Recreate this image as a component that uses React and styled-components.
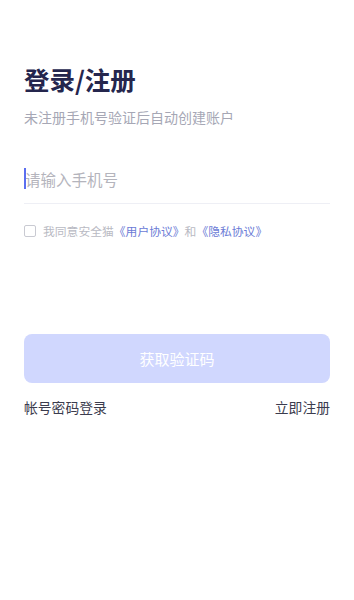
import React, { useState } from "react";
import styled, { createGlobalStyle } from "styled-components";

const GlobalStyle = createGlobalStyle`
  html, body {
    margin: 0;
    padding: 0;
    background: #fff;
  }
  body {
    font-family: "Noto Sans CJK SC", "Noto Sans", sans-serif;
  }
`;

function App() {
  const [phone, setPhone] = useState("");
  const [agreed, setAgreed] = useState(false);

  return (
    <Page>
      <GlobalStyle />
      <Title>登录/注册</Title>
      <Subtitle>未注册手机号验证后自动创建账户</Subtitle>

      <InputRow>
        <Caret />
        <PhoneInput
          value={phone}
          placeholder="请输入手机号"
          onChange={(e) => setPhone(e.target.value)}
        />
      </InputRow>

      <AgreeRow onClick={() => setAgreed(!agreed)}>
        <CheckBox checked={agreed} />
        <AgreeText>
          我同意安全猫<Link>《用户协议》</Link>和<Link>《隐私协议》</Link>
        </AgreeText>
      </AgreeRow>

      <SubmitBtn disabled={!phone || !agreed}>获取验证码</SubmitBtn>

      <BottomLinks>
        <TextLink>帐号密码登录</TextLink>
        <TextLink>立即注册</TextLink>
      </BottomLinks>
    </Page>
  );
}

export default App;

const Page = styled.div`
  display: flex;
  flex-direction: column;
  padding: 61px 24px 0;
  min-height: 600px;
  box-sizing: border-box;
`;

const Title = styled.h1`
  margin: 0;
  font-size: 25.5px;
  line-height: 36px;
  font-weight: 700;
  color: #25264d;
`;

const Subtitle = styled.p`
  margin: 9px 0 0;
  font-size: 14px;
  line-height: 22px;
  color: #a6a7b5;
`;

const InputRow = styled.div`
  position: relative;
  margin-top: 27px;
  height: 48px;
  display: flex;
  align-items: center;
  border-bottom: 1px solid #eeeff5;
`;

const Caret = styled.span`
  position: absolute;
  left: 0;
  top: 13px;
  width: 2px;
  height: 21px;
  background: #5b6ef0;
`;

const PhoneInput = styled.input`
  flex: 1;
  border: none;
  outline: none;
  padding: 0 0 0 1px;
  font-family: inherit;
  font-size: 15.5px;
  color: #25264d;
  background: transparent;

  &::placeholder {
    color: #b4b4bc;
  }
`;

const AgreeRow = styled.div`
  margin-top: 17px;
  height: 20px;
  display: flex;
  align-items: center;
  gap: 7px;
  cursor: pointer;
`;

const CheckBox = styled.span`
  width: 12px;
  height: 12px;
  box-sizing: border-box;
  border: 1px solid #c9cad2;
  border-radius: 2px;
  background: ${(p) => (p.checked ? "#5b6ef0" : "#fff")};
`;

const AgreeText = styled.span`
  font-size: 11.8px;
  line-height: 20px;
  color: #b9bac3;
`;

const Link = styled.span`
  color: #6b7bd6;
`;

const SubmitBtn = styled.button`
  margin-top: 93px;
  height: 49px;
  border: none;
  border-radius: 8px;
  background: #d0d7fe;
  color: #fff;
  font-family: inherit;
  font-size: 15px;
  cursor: pointer;

  &:disabled {
    cursor: default;
  }
`;

const BottomLinks = styled.div`
  margin-top: 14px;
  display: flex;
  justify-content: space-between;
`;

const TextLink = styled.span`
  font-size: 13.8px;
  line-height: 20px;
  color: #3b3c4e;
`;
